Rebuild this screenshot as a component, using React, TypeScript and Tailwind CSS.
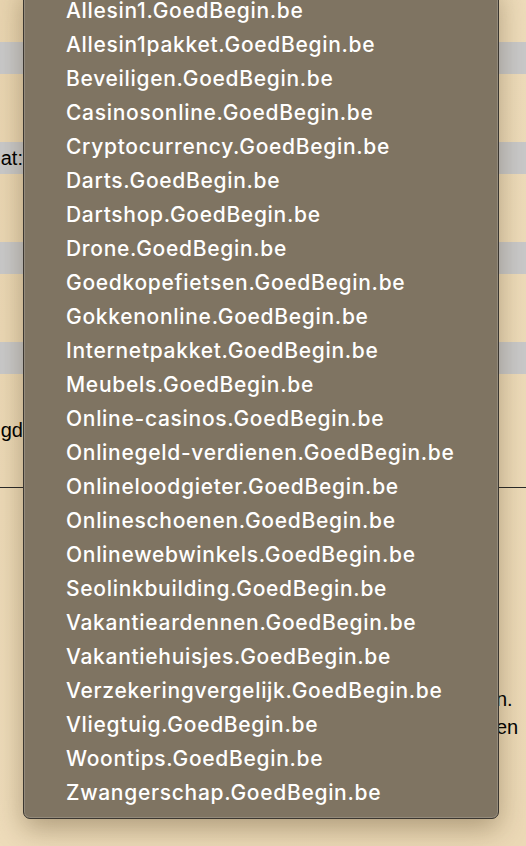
import React from 'react';

const sites = [
  'Allesin1',
  'Allesin1pakket',
  'Beveiligen',
  'Casinosonline',
  'Cryptocurrency',
  'Darts',
  'Dartshop',
  'Drone',
  'Goedkopefietsen',
  'Gokkenonline',
  'Internetpakket',
  'Meubels',
  'Online-casinos',
  'Onlinegeld-verdienen',
  'Onlineloodgieter',
  'Onlineschoenen',
  'Onlinewebwinkels',
  'Seolinkbuilding',
  'Vakantieardennen',
  'Vakantiehuisjes',
  'Verzekeringvergelijk',
  'Vliegtuig',
  'Woontips',
  'Zwangerschap',
];

const Bar = ({ label }: { label?: string }) => (
  <div className="h-[32px] bg-[#c9c9c9] flex items-center">
    <div className="w-[23px] flex justify-end">
      {label && <span className="whitespace-nowrap text-[20px] text-black">{label}</span>}
    </div>
  </div>
);

const App = () => {
  return (
    <div
      className="relative w-[526px] h-[846px] overflow-hidden bg-gradient-to-br from-[#e9d5b0] via-[#eedcba] to-[#ecd9b6]"
      style={{ fontFamily: '"Liberation Sans", Arial, sans-serif' }}
    >
      {/* page behind the open select */}
      <div className="flex flex-col">
        <div className="h-[42px]" />
        <Bar />
        <div className="h-[68px]" />
        <Bar label="at:" />
        <div className="h-[68px]" />
        <Bar />
        <div className="h-[68px]" />
        <Bar />
        <div className="h-[42px]" />
        <div className="h-[28px] flex items-center">
          <div className="w-[23px] flex justify-end">
            <span className="whitespace-nowrap text-[20px] text-black">gd</span>
          </div>
        </div>
        <div className="h-[43px]" />
        <div className="h-px bg-[#2a2a2a] w-full" />
        <div className="h-[197px]" />
        <div className="flex flex-col items-start pl-[496px] text-[20px] leading-[28px] text-black">
          <span className="whitespace-nowrap">n.</span>
          <span className="whitespace-nowrap">en</span>
        </div>
      </div>

      {/* native select popup */}
      <div className="absolute left-[23px] top-[-16px] w-[476px] rounded-b-[7px] border border-[#3b3731] bg-[#7f7462] shadow-[0_10px_28px_rgba(60,40,10,0.35),inset_0_0_0_1px_rgba(255,255,255,0.16)] pt-[9px] pb-[8px]">
        <ul className="flex flex-col font-['Inter',sans-serif]">
          {sites.map((s) => (
            <li
              key={s}
              className="h-[34px] flex items-center pl-[42px] text-[21px] leading-[20px] font-medium tracking-[0.7px] text-white whitespace-nowrap"
            >
              {s}.GoedBegin.be
            </li>
          ))}
        </ul>
      </div>
    </div>
  );
};

export default App;
